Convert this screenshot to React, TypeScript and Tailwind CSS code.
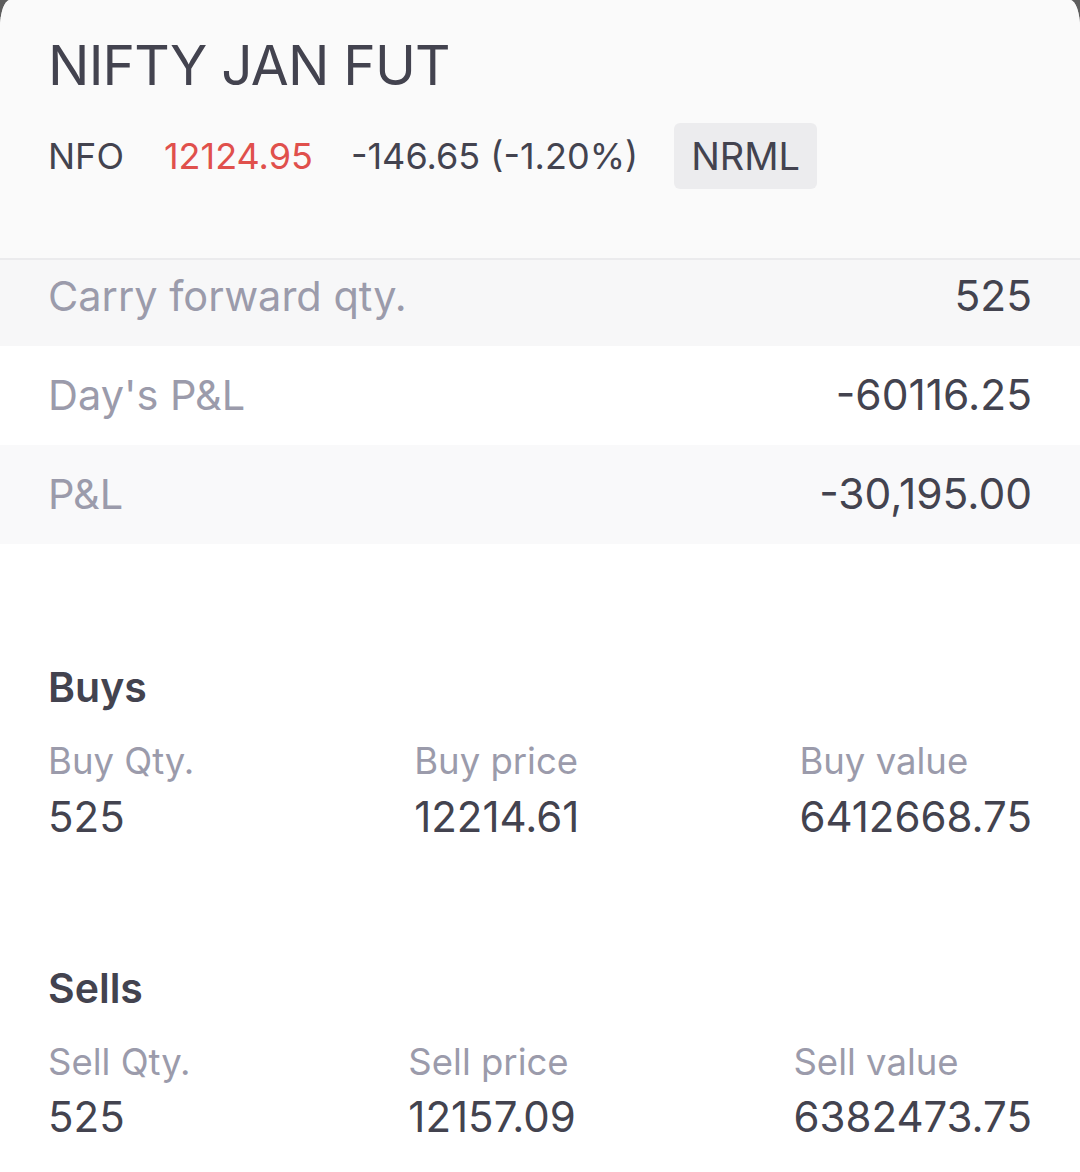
const rows = [
  { label: 'Carry forward qty.', value: '525', bg: 'bg-[#f7f7f8]', h: 'h-[86px] pb-[13px]' },
  { label: "Day's P&L", value: '-60116.25', bg: 'bg-white', h: 'h-[99px]' },
  { label: 'P&L', value: '-30,195.00', bg: 'bg-[#f9f9fa]', h: 'h-[99px]' },
]

const sections = [
  {
    title: 'Buys',
    cols: [
      { label: 'Buy Qty.', value: '525' },
      { label: 'Buy price', value: '12214.61' },
      { label: 'Buy value', value: '6412668.75' },
    ],
  },
  {
    title: 'Sells',
    cols: [
      { label: 'Sell Qty.', value: '525' },
      { label: 'Sell price', value: '12157.09' },
      { label: 'Sell value', value: '6382473.75' },
    ],
  },
]

export default function App() {
  return (
    <div
      className="w-full h-[1172px] overflow-hidden bg-[#5e5e5e]"
      style={{ fontFamily: 'Inter, "Noto Sans", sans-serif' }}
    >
      <div className="h-full bg-white rounded-tl-[10px_28px] rounded-tr-[10px_28px] overflow-hidden">
        {/* header */}
        <div className="h-[260px] bg-[#fafafa] border-b-2 border-[#ebebed] px-[48px] pt-[38px]">
          <h1 className="text-[55px] leading-none font-normal text-[#43434f] tracking-[-0.8px]">
            NIFTY JAN FUT
          </h1>
          <div className="mt-[30px] flex items-center text-[36px] leading-none text-[#43434f]">
            <span>NFO</span>
            <span className="ml-[40px] text-[#e0504c]">12124.95</span>
            <span className="ml-[38px]">-146.65 (-1.20%)</span>
            <span className="ml-[36px] h-[66px] px-[17px] flex items-center rounded-[6px] bg-[#ececee] text-[38px]">
              NRML
            </span>
          </div>
        </div>

        {/* summary rows */}
        <div className="shadow-[inset_0_6px_8px_-6px_rgba(0,0,0,0.06)]">
          {rows.map((r) => (
            <div
              key={r.label}
              className={`${r.bg} ${r.h} px-[48px] flex items-center justify-between leading-none`}
            >
              <span className="text-[41.5px] text-[#9b9bab]">{r.label}</span>
              <span className="text-[42.5px] text-[#43434f]">{r.value}</span>
            </div>
          ))}
        </div>

        {/* buys / sells */}
        <div className="px-[48px] pt-[123px] flex flex-col gap-[130px]">
          {sections.map((s) => (
            <div key={s.title}>
              <h2 className="text-[41px] leading-none font-semibold text-[#43434f]">{s.title}</h2>
              <div className="mt-[35px] flex justify-between">
                {s.cols.map((c) => (
                  <div key={c.label} className="flex flex-col">
                    <span className="text-[36.5px] leading-none text-[#9b9bab]">{c.label}</span>
                    <span className="mt-[16px] text-[42px] leading-none text-[#43434f]">{c.value}</span>
                  </div>
                ))}
              </div>
            </div>
          ))}
        </div>
      </div>
    </div>
  )
}
